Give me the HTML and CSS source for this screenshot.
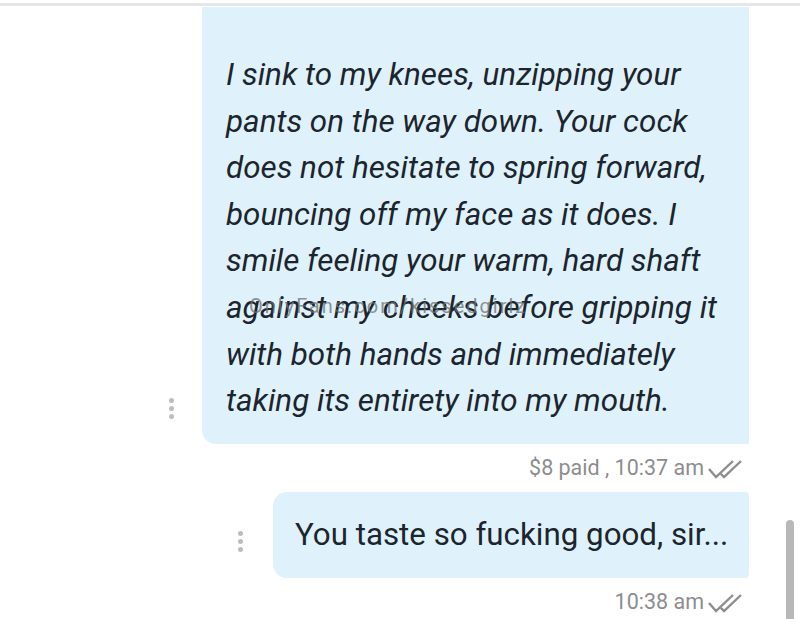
FILE: index.html
```
<!DOCTYPE html>
<html>

<head lang="en">
    <meta charset="UTF-8">
    <title>Chat</title>
    <link rel="stylesheet" href="styles.css">
</head>

<body>
    <div class="topline"></div>
    <div class="chat">
        <!-- paid message -->
        <div class="row">
            <div class="dots"><i></i><i></i><i></i></div>
            <div class="bubble big">
                <p class="msg italic">I sink to my knees, unzipping your<br>pants on the way down. Your cock<br>does not hesitate to spring forward,<br>bouncing off my face as it does. I<br>smile feeling your warm, hard shaft<br>against my cheeks before gripping it<br>with both hands and immediately<br>taking its entirety into my mouth.</p>
                <span class="mark">OnlyFans.com/kissedgirlz</span>
            </div>
        </div>
        <div class="meta">$8 paid , 10:37 am
            <svg class="check" viewBox="0 0 36 22" width="36" height="22">
                <path d="M2 11 L9 19 L26 3 M14 16 L17 19 L34 3" fill="none" stroke="#8d8d8d" stroke-width="2.4" />
            </svg>
        </div>

        <div class="row second">
            <div class="dots"><i></i><i></i><i></i></div>
            <div class="bubble small">
                <p class="msg">You taste so fucking good, sir...</p>
            </div>
        </div>
        <div class="meta">10:38 am
            <svg class="check" viewBox="0 0 36 22" width="36" height="22">
                <path d="M2 11 L9 19 L26 3 M14 16 L17 19 L34 3" fill="none" stroke="#8d8d8d" stroke-width="2.4" />
            </svg>
        </div>
    </div>
    <div class="scrollbar"></div>
</body>

</html>
```

FILE: styles.css
```
* {
    margin: 0;
    padding: 0;
}

body {
    width: 800px;
    height: 619px;
    overflow: hidden;
    background: #fff;
    font-family: Roboto, "Noto Sans", sans-serif;
    position: relative;
}

.topline {
    height: 3px;
    margin-top: 3px;
    background: #e4e6e8;
}

.chat {
    display: flex;
    flex-direction: column;
    padding-right: 51px;
}

.row {
    display: flex;
    justify-content: flex-end;
    align-items: flex-end;
}

.bubble {
    background: #dff2fc;
    color: #1c252d;
    position: relative;
}

.big {
    width: 547px;
    padding: 45px 10px 19px 24px;
    box-sizing: border-box;
    border-radius: 0 0 0 14px;
    margin-top: 1px;
}

.small {
    width: 476px;
    height: 86px;
    box-sizing: border-box;
    padding: 0 22px;
    display: flex;
    align-items: center;
    border-radius: 14px 4px 4px 14px;
}

.msg {
    font-size: 31.4px;
    line-height: 46.6px;
    white-space: nowrap;
}

.italic {
    font-style: italic;
}

.small .msg {
    font-size: 31.3px;
    line-height: 36px;
}

.mark {
    position: absolute;
    left: 47px;
    top: 287px;
    font-size: 20px;
    color: rgba(110, 110, 110, 0.75);
    letter-spacing: 2px;
}

.dots {
    display: flex;
    flex-direction: column;
    gap: 3px;
    margin-right: 28px;
    margin-bottom: 25px;
}

.dots i {
    width: 5px;
    height: 5px;
    border-radius: 50%;
    background: #bdbdbd;
}

.second .dots {
    margin-right: 30px;
    margin-bottom: 26px;
}

.meta {
    display: flex;
    justify-content: flex-end;
    align-items: center;
    font-size: 21.5px;
    color: #8d8d8d;
    height: 48px;
    padding-right: 6px;
    gap: 3px;
}

.check {
    margin-top: 2px;
}

.scrollbar {
    position: absolute;
    right: 6px;
    top: 520px;
    width: 8px;
    height: 110px;
    border-radius: 4px 4px 0 0;
    background: #b8b8b8;
}
```
